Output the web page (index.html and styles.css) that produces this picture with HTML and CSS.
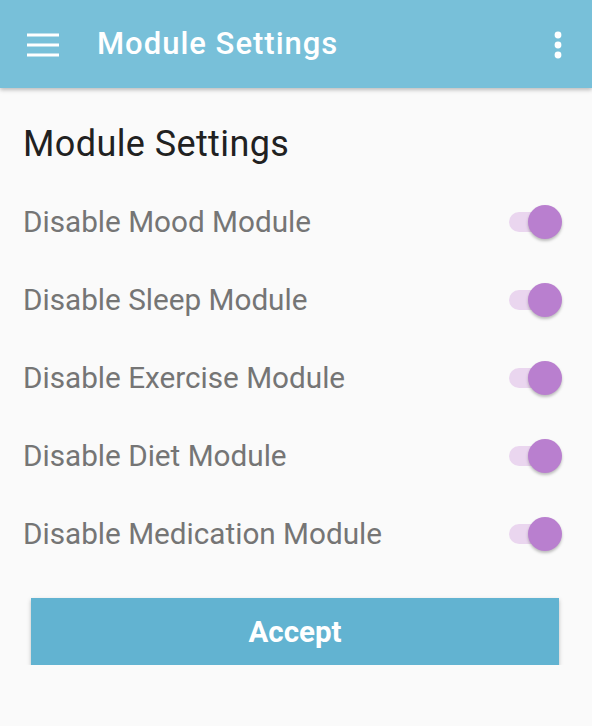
FILE: index.html
```html
<!DOCTYPE html>
<html>
<head>
<meta charset="utf-8">
<link rel="stylesheet" href="styles.css">
</head>
<body>
<header class="appbar">
  <svg class="menu" width="32" height="24" viewBox="0 0 32 24">
    <rect x="0" y="0.5" width="32" height="3" fill="#fff"/>
    <rect x="0" y="10.5" width="32" height="3" fill="#fff"/>
    <rect x="0" y="20.5" width="32" height="3" fill="#fff"/>
  </svg>
  <div class="title">Module Settings</div>
  <svg class="kebab" width="8" height="28" viewBox="0 0 8 28">
    <circle cx="4" cy="4" r="3.4" fill="#fff"/>
    <circle cx="4" cy="14" r="3.4" fill="#fff"/>
    <circle cx="4" cy="24" r="3.4" fill="#fff"/>
  </svg>
</header>
<main class="content">
  <h1 class="heading">Module Settings</h1>
  <div class="row"><span class="label">Disable Mood Module</span><span class="switch"><span class="track"></span><span class="thumb"></span></span></div>
  <div class="row"><span class="label">Disable Sleep Module</span><span class="switch"><span class="track"></span><span class="thumb"></span></span></div>
  <div class="row"><span class="label">Disable Exercise Module</span><span class="switch"><span class="track"></span><span class="thumb"></span></span></div>
  <div class="row"><span class="label">Disable Diet Module</span><span class="switch"><span class="track"></span><span class="thumb"></span></span></div>
  <div class="row"><span class="label">Disable Medication Module</span><span class="switch"><span class="track"></span><span class="thumb"></span></span></div>
  <button class="accept">Accept</button>
</main>
</body>
</html>
```
FILE: styles.css
```css
html, body {
  margin: 0;
  padding: 0;
  background: #fafafa;
  font-family: Roboto, "Liberation Sans", sans-serif;
}
.appbar {
  height: 88px;
  background: #78c0d9;
  display: flex;
  align-items: center;
  padding: 0 30px 0 27px;
  box-shadow: 0 2px 4px rgba(0,0,0,0.25);
  position: relative;
}
.menu { display: block; margin-top: 2px; }
.title {
  color: #fff;
  font-size: 31px;
  letter-spacing: 1px;
  font-weight: 500;
  margin-left: 38px;
  flex: 1;
  line-height: 36px;
  margin-top: 0;
}
.kebab { display: block; margin-top: 2px; }
.content {
  padding: 0 30px 0 23px;
}
.heading {
  margin: 0 0 18px 0;
  padding-top: 36px;
  font-size: 36px;
  letter-spacing: 0.4px;
  font-weight: 400;
  color: #212121;
  line-height: 40px;
}
.row {
  height: 78px;
  display: flex;
  align-items: center;
  justify-content: space-between;
}
.label {
  font-size: 29.7px;
  color: #757575;
}
.switch {
  position: relative;
  width: 53px;
  height: 34px;
  display: block;
  margin-top: 2px;
}
.track {
  position: absolute;
  left: 0;
  top: 7px;
  width: 46px;
  height: 20px;
  border-radius: 10px;
  background: #ead6ef;
}
.thumb {
  position: absolute;
  right: 0;
  top: 0;
  width: 34px;
  height: 34px;
  border-radius: 50%;
  background: #b97fcf;
  box-shadow: 0 2px 3px rgba(0,0,0,0.25);
}
.accept {
  display: block;
  margin: 26px 0 0 8px;
  width: 528px;
  height: 67px;
  border: none;
  background: #62b3d1;
  color: #fff;
  font-family: Roboto, "Liberation Sans", sans-serif;
  font-size: 29.5px;
  font-weight: 700;
  box-shadow: 0 2px 4px rgba(0,0,0,0.25);
}
```
